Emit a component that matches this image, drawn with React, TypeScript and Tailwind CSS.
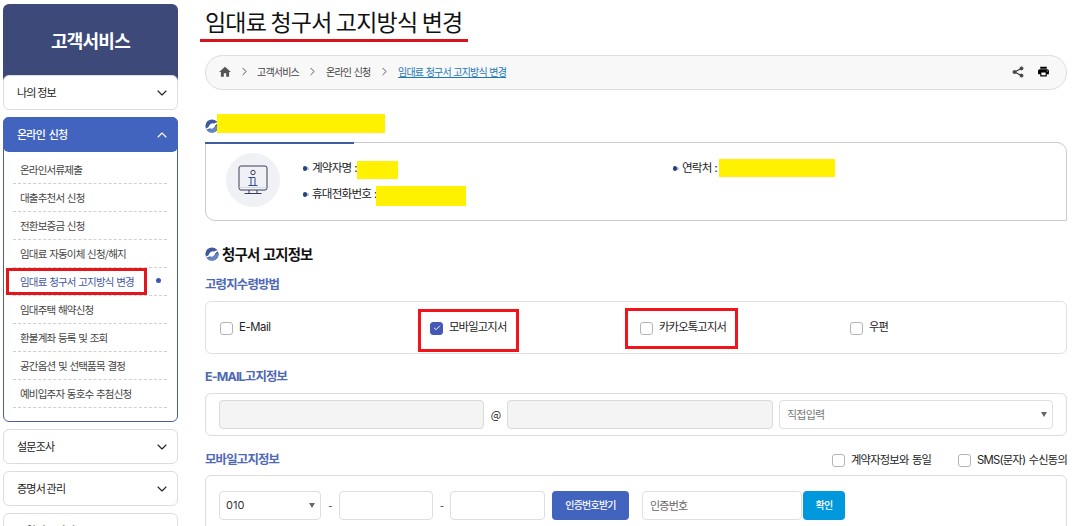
import type { ReactNode } from "react";
import { Check, ChevronDown, ChevronRight, ChevronUp } from "lucide-react";
import { MdHome, MdLocalPrintshop } from "react-icons/md";

const subMenu = [
  "온라인서류제출",
  "대출추천서 신청",
  "전환보증금 신청",
  "임대료 자동이체 신청/해지",
  "임대료 청구서 고지방식 변경",
  "임대주택 해약신청",
  "환불계좌 등록 및 조회",
  "공간옵션 및 선택품목 결정",
  "예비입주자 동호수 추첨신청",
];

function MenuItem({ label }: { label: string }) {
  return (
    <button className="flex h-[35px] w-full items-center justify-between rounded-md border border-[#dcdde2] bg-white pr-[7px] pl-[13px] text-[11px] text-[#222]">
      {label}
      <ChevronDown className="h-4 w-4" strokeWidth={1.7} />
    </button>
  );
}

function Sidebar() {
  return (
    <aside className="mt-1 ml-[3px] w-[175px] shrink-0">
      <h2 className="flex h-[76px] items-center justify-center rounded-t-md bg-[#3c4979] pb-[4px] text-[18px] font-bold text-white">
        고객서비스
      </h2>
      <div className="-mt-[5px]">
        <MenuItem label="나의 정보" />
      </div>
      <div className="mt-[7px] h-[305px] rounded-md border border-[#4a5f9f] bg-white">
        <button className="-mx-px -mt-px flex h-[35px] w-[175px] items-center justify-between rounded-md bg-[#4263be] pr-[8px] pl-[14px] text-[11px] font-medium text-white [word-spacing:2px]">
          온라인 신청
          <ChevronUp className="h-4 w-4" strokeWidth={1.7} />
        </button>
        <ul className="mt-[4px] pr-[10px] pl-[9px]">
          {subMenu.map((item) => {
            const active = item === "임대료 청구서 고지방식 변경";
            return (
              <li
                key={item}
                className={`relative flex h-7 items-center justify-between border-b border-dashed border-[#cfd0d4] pr-[6px] pl-[7px] text-[10.5px] ${
                  active ? "text-[#3f55a5]" : "text-[#444]"
                }`}>
                {item}
                {active && (
                  <>
                    <span className="mb-[2px] h-[5px] w-[5px] rounded-full bg-[#3f55b0]" />
                    <span className="absolute top-0 -left-[7px] h-[27px] w-[141px] border-3 border-[#e3161b]" />
                  </>
                )}
              </li>
            );
          })}
        </ul>
      </div>
      <div className="mt-[7px] flex flex-col gap-[7px]">
        <MenuItem label="설문조사" />
        <MenuItem label="증명서 관리" />
        <MenuItem label="분양정보 관리" />
      </div>
    </aside>
  );
}

function Emblem() {
  return (
    <svg viewBox="0 0 14 14" className="h-[14px] w-[14px] shrink-0">
      <circle cx="7" cy="7" r="6.6" fill="#3f589f" />
      <path d="M13.500 6A6.600 6.600 0 0 1 2.500 11.800L7 8.500z" fill="#6685c2" />
      <ellipse cx="7" cy="7" rx="3" ry="2.300" fill="white" transform="rotate(-35 7 7)" />
      <path d="M0 9.800C1.800 9.600 3.400 8.600 4.600 6.600L5.800 8.600C4.500 9.900 3 10.600 .6 10.700z" fill="white" />
      <path d="M14 4.200C12.200 4.400 10.600 5.400 9.400 7.400L8.200 5.400C9.500 4.100 11 3.400 13.400 3.300z" fill="white" />
    </svg>
  );
}

function MonitorIcon() {
  return (
    <svg viewBox="0 0 30 30" className="h-[30px] w-[30px]" fill="none" stroke="#353c5c" strokeWidth="1">
      <rect x="1" y="1" width="28" height="24" rx="2" />
      <path d="M1 22.500h28" stroke="#c3c8d8" strokeWidth=".6" />
      <path d="M11 25v3.500M19 25v3.500M6.500 28.500h17" />
      <circle cx="15" cy="7.500" r="2.200" />
      <path d="M10.500 12.500h6.500v8M10.500 20.500h9M13 12.500v8" stroke="#2f4a99" />
    </svg>
  );
}

function ShareIcon() {
  return (
    <svg viewBox="0 0 12 12" className="h-3 w-3 text-[#444]" fill="currentColor" stroke="currentColor">
      <path d="M9.500 2.500L2.500 6l7 3.500" fill="none" strokeWidth="1.200" />
      <circle cx="9.500" cy="2.400" r="1.500" />
      <circle cx="2.500" cy="6" r="1.500" />
      <circle cx="9.500" cy="9.600" r="1.500" />
    </svg>
  );
}

function Checkbox({ label, checked }: { label: string; checked?: boolean }) {
  return (
    <label className="flex items-center gap-[6px] font-['Inter','Noto_Sans_CJK_KR',sans-serif] text-[11.3px] whitespace-nowrap text-[#222]">
      <span
        className={`mt-px flex h-[13px] w-[13px] items-center justify-center rounded-[3px] border ${
          checked ? "border-[#4657b5] bg-[#4657b5]" : "border-[#b4b4b4] bg-white"
        }`}>
        {checked && <Check className="h-2 w-2 text-white" strokeWidth={3} />}
      </span>
      {label}
    </label>
  );
}

function Field({ label, children }: { label: string; children?: ReactNode }) {
  return (
    <div className="flex h-[26px] items-center text-[11.6px] text-[#222]">
      <span className="mr-[3px] flex items-center">
        <i className="h-[5px] w-[4px] rounded-full bg-[#26417f]" />
        <i className="h-[3px] w-[2px] rounded-r-full bg-[#a9b9dd]" />
      </span>
      {label}
      {children}
    </div>
  );
}

function Caret() {
  return <span className="border-x-[3.5px] border-t-[5px] border-x-transparent border-t-[#666]" />;
}

function Section({ title, children }: { title: string; children?: ReactNode }) {
  return (
    <div className="flex h-5 items-center justify-between font-['Inter','Noto_Sans_CJK_KR',sans-serif] text-[12.4px] font-bold text-[#4e68b5]">
      {title}
      {children}
    </div>
  );
}

export default function App() {
  return (
    <div className="flex h-[526px] w-[1076px] overflow-hidden bg-white font-['Noto_Sans_CJK_KR',sans-serif] tracking-[-0.8px] [word-spacing:1px]">
      <Sidebar />
      <main className="ml-[27px] w-[862px] shrink-0">
        <div className="relative h-[55px]">
          <h1 className="flex h-[43px] items-center text-[23px] whitespace-nowrap text-[#111] [word-spacing:0px]">
            임대료 청구서 고지방식 변경
          </h1>
          <span className="absolute top-[39px] -left-[5px] h-[3px] w-[268px] bg-[#d9141d]" />
        </div>

        <nav className="flex h-[35px] items-center rounded-full border border-[#dedede] bg-[#f8f8f8] px-[12px] pb-[2px] text-[10px] text-[#444]">
          <MdHome className="h-[14px] w-[14px] text-[#555]" />
          <ChevronRight className="mx-[6px] h-[13px] w-[13px] text-[#555]" strokeWidth={1.8} />
          <span className="w-[43px] whitespace-nowrap">고객서비스</span>
          <ChevronRight className="mr-[7px] ml-[6px] h-[13px] w-[13px] text-[#555]" strokeWidth={1.8} />
          <span className="w-[45px] whitespace-nowrap">온라인 신청</span>
          <ChevronRight className="mr-[7px] ml-[7px] h-[13px] w-[13px] text-[#555]" strokeWidth={1.8} />
          <a className="whitespace-nowrap text-[#1e78b8] underline">임대료 청구서 고지방식 변경</a>
          <span className="ml-auto">
            <ShareIcon />
          </span>
          <MdLocalPrintshop className="mr-[4px] ml-[13px] h-[13px] w-[13px] text-black" />
        </nav>

        <div className="mt-[24px] flex h-[28px]">
          <div className="mt-[5px]">
            <Emblem />
          </div>
          <span className="-ml-[2px] h-[19px] w-[168px] bg-[#fff100]" />
        </div>
        <section className="relative flex h-[79px] rounded-tr-[10px] rounded-bl-[10px] border border-[#c9cbd1]">
          <span className="absolute -top-px -left-px h-[2px] w-[149px] bg-[#3f5ca8]" />
          <div className="mt-[10px] ml-[20px] flex h-[54px] w-[54px] items-center justify-center rounded-full bg-[#f0f1f5]">
            <MonitorIcon />
          </div>
          <div className="mt-[12px] ml-[23px] w-[370px]">
            <Field label="계약자명 :">
              <span className="mt-[3px] h-[18px] w-[41px] bg-[#fff100]" />
            </Field>
            <Field label="휴대전화번호 :">
              <span className="mt-[3px] h-[20px] w-[90px] bg-[#fff100]" />
            </Field>
          </div>
          <div className="mt-[12px]">
            <Field label="연락처 :">
              <span className="ml-[2px] h-[18px] w-[116px] bg-[#fff100]" />
            </Field>
          </div>
        </section>

        <h2 className="mt-[23px] flex h-5 items-center gap-[3px] text-[14.4px] font-bold text-[#111]">
          <Emblem />
          청구서 고지정보
        </h2>

        <div className="mt-[11px]">
          <Section title="고령지수령방법" />
        </div>
        <section className="mt-[6px] grid h-[53px] grid-cols-[210px_210px_210px_1fr] items-center rounded-md border border-[#e0e0e3] pl-[14px]">
          <div className="tracking-[-0.4px]">
            <Checkbox label="E-Mail" />
          </div>
          <div className="relative">
            <Checkbox label="모바일고지서" checked />
            <span className="absolute -top-[10px] -left-[12px] h-[43px] w-[101px] border-3 border-[#f1141b]" />
          </div>
          <div className="relative">
            <Checkbox label="카카오톡고지서" />
            <span className="absolute -top-[11px] -left-[15px] h-[41px] w-[113px] border-3 border-[#f1141b]" />
          </div>
          <Checkbox label="우편" />
        </section>

        <div className="mt-[13px]">
          <Section title="E-MAIL고지정보" />
        </div>
        <section className="mt-[6px] flex h-[43px] items-center rounded-md border border-[#dddde0] px-[13px] text-[11px] text-[#222]">
          <span className="h-[29px] w-[265px] rounded border border-[#dadada] bg-[#f4f4f4]" />
          <span className="w-[23px] pb-px text-center">@</span>
          <span className="h-[29px] w-[266px] rounded border border-[#dadada] bg-[#f4f4f4]" />
          <span className="ml-[6px] flex h-[29px] w-[274px] items-center justify-between rounded border border-[#e0e0e0] pr-[5px] pl-[7px] text-[#777]">
            직접입력
            <Caret />
          </span>
        </section>

        <div className="mt-[14px]">
          <Section title="모바일고지정보">
            <div className="flex gap-[27px] font-normal">
              <Checkbox label="계약자정보와 동일" />
              <Checkbox label="SMS(문자) 수신동의" />
            </div>
          </Section>
        </div>
        <section className="mt-[5px] flex h-[70px] items-start rounded-md border border-[#dddde0] px-[13px] pt-[15px] text-[11px] leading-[29px] text-[#333]">
          <span className="flex h-[29px] w-[102px] items-center justify-between rounded border border-[#dedede] pr-[5px] pl-[6px] font-['Inter','Noto_Sans_CJK_KR',sans-serif] tracking-normal">
            010
            <Caret />
          </span>
          <span className="w-[18px] text-center">-</span>
          <span className="h-[29px] w-[94px] rounded border border-[#dedede]" />
          <span className="w-[17px] text-center">-</span>
          <span className="h-[29px] w-[95px] rounded border border-[#dedede]" />
          <button className="ml-[7px] h-[29px] w-[77px] rounded bg-[#4263be] pb-px text-[10px] leading-[28px] font-medium text-white">
            인증번호받기
          </button>
          <span className="ml-[13px] flex h-[29px] w-[160px] items-center rounded border border-[#e0e0e0] pb-px pl-[7px] text-[#666]">
            인증번호
          </span>
          <button className="ml-px h-[29px] w-[42px] rounded bg-[#0098dc] pb-px text-[10px] leading-[28px] font-medium text-white">
            확인
          </button>
        </section>
      </main>
    </div>
  );
}
